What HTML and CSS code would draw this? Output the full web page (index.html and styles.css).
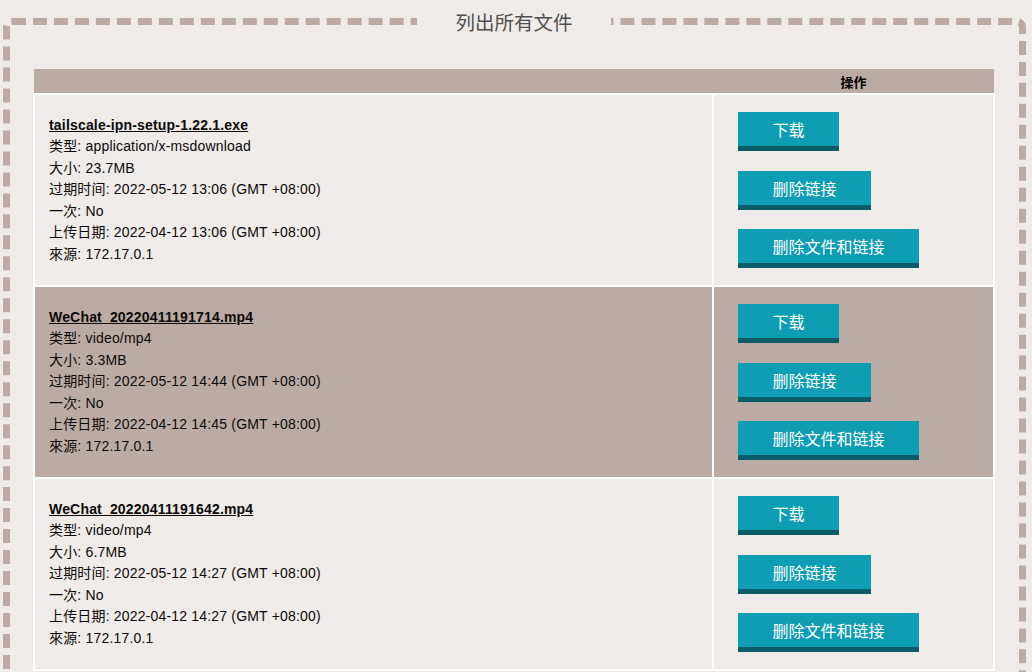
FILE: index.html
```html
<!DOCTYPE html>
<html lang="zh">
<head>
<meta charset="utf-8">
<title>列出所有文件</title>
<link rel="stylesheet" href="styles.css">
</head>
<body>
<fieldset class="panel">
  <legend class="panel-title">列出所有文件</legend>
  <table class="files">
    <colgroup><col class="col-info"><col class="col-ops"></colgroup>
    <thead>
      <tr><th></th><th>操作</th></tr>
    </thead>
    <tbody>
      <tr>
        <td class="info">
          <a class="fname" href="#">tailscale-ipn-setup-1.22.1.exe</a><br>
          类型: application/x-msdownload<br>
          大小: 23.7MB<br>
          过期时间: 2022-05-12 13:06 (GMT +08:00)<br>
          一次: No<br>
          上传日期: 2022-04-12 13:06 (GMT +08:00)<br>
          來源: 172.17.0.1
        </td>
        <td class="ops">
          <div class="btns">
            <a class="btn" href="#">下载</a>
            <a class="btn" href="#">删除链接</a>
            <a class="btn" href="#">删除文件和链接</a>
          </div>
        </td>
      </tr>
      <tr class="alt">
        <td class="info">
          <a class="fname" href="#">WeChat_20220411191714.mp4</a><br>
          类型: video/mp4<br>
          大小: 3.3MB<br>
          过期时间: 2022-05-12 14:44 (GMT +08:00)<br>
          一次: No<br>
          上传日期: 2022-04-12 14:45 (GMT +08:00)<br>
          來源: 172.17.0.1
        </td>
        <td class="ops">
          <div class="btns">
            <a class="btn" href="#">下载</a>
            <a class="btn" href="#">删除链接</a>
            <a class="btn" href="#">删除文件和链接</a>
          </div>
        </td>
      </tr>
      <tr>
        <td class="info">
          <a class="fname" href="#">WeChat_20220411191642.mp4</a><br>
          类型: video/mp4<br>
          大小: 6.7MB<br>
          过期时间: 2022-05-12 14:27 (GMT +08:00)<br>
          一次: No<br>
          上传日期: 2022-04-12 14:27 (GMT +08:00)<br>
          來源: 172.17.0.1
        </td>
        <td class="ops">
          <div class="btns">
            <a class="btn" href="#">下载</a>
            <a class="btn" href="#">删除链接</a>
            <a class="btn" href="#">删除文件和链接</a>
          </div>
        </td>
      </tr>
    </tbody>
  </table>
</fieldset>
</body>
</html>
```

FILE: styles.css
```css
html, body {
  background: #efebe8;
}
body {
  margin: 8px 0 0 0;
  font-family: "Liberation Sans", "Noto Sans CJK SC", sans-serif;
  color: #0a0a0a;
}
.panel {
  margin: 0 7px 20px 3px;
  padding: 34px 24px 24px 23px;
  border: 7px dashed #bcaba4;
  border-radius: 9px;
}
.panel-title {
  margin: 0 auto;
  padding: 0 38px;
  font-family: "Noto Sans CJK SC", "Liberation Sans", sans-serif;
  font-size: 19.5px;
  line-height: 27px;
  color: #4f4f4f;
}
.files {
  width: 960px;
  border-collapse: collapse;
  table-layout: fixed;
}
.col-info { width: 679px; }
.col-ops { width: 281px; }
.files th {
  background: #bcaba4;
  height: 24px;
  padding: 0;
  font-size: 13px;
  font-weight: bold;
  color: #000;
  text-align: center;
  font-family: "Liberation Sans", "Noto Sans CJK SC", sans-serif;
}
.files td {
  border: 2px solid #ffffff;
  padding: 0;
}
.files tr.alt td {
  background: #bcaba4;
}
.info {
  padding: 0 14px !important;
  vertical-align: middle;
  font-size: 14px;
  line-height: 21.5px;
  letter-spacing: 0.18px;
}
.fname {
  color: #0a0a0a;
  font-weight: bold;
  text-decoration: underline;
}
.ops {
  vertical-align: middle;
  padding: 17px 23px 17px 24px !important;
}
.btns {
  display: flex;
  flex-direction: column;
  align-items: flex-start;
  gap: 19.5px;
}
.btn {
  display: block;
  height: 34px;
  line-height: 34px;
  padding: 0 34.5px;
  background: #0e9db3;
  border-bottom: 5px solid #0a5c69;
  color: #ffffff;
  font-size: 16px;
  font-family: "Noto Sans CJK SC", "Liberation Sans", sans-serif;
  text-decoration: none;
  white-space: nowrap;
}
```
